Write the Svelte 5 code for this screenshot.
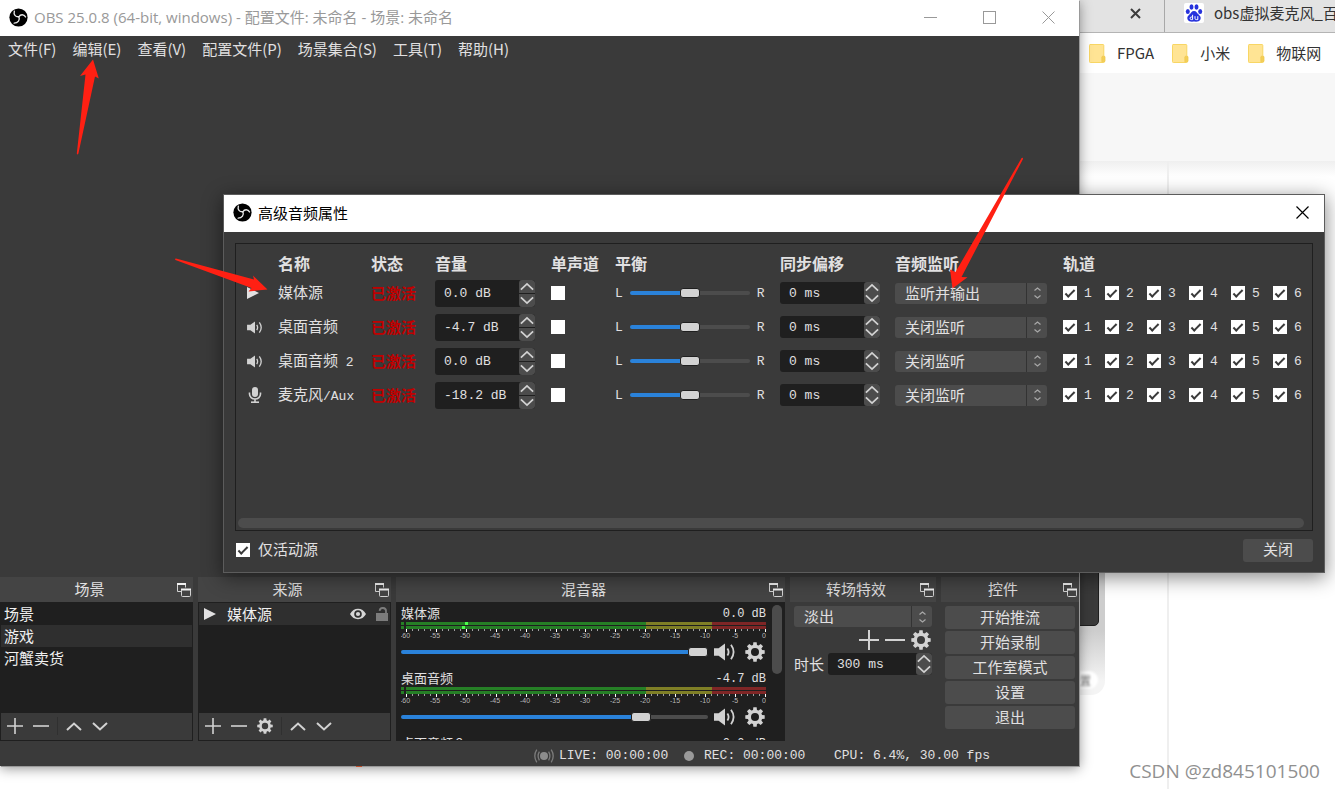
<script>
  const menus = ['文件(F)', '编辑(E)', '查看(V)', '配置文件(P)', '场景集合(S)', '工具(T)', '帮助(H)'];
  const bookmarks = ['FPGA', '小米', '物联网'];
  const scenes = ['场景', '游戏', '河蟹卖货'];
  const controls = ['开始推流', '开始录制', '工作室模式', '设置', '退出'];
  const monitorModes = ['关闭监听', '仅监听', '监听并输出'];
  const tracks = [1, 2, 3, 4, 5, 6];

  const strips = [
    { name: '媒体源', suffix: '', db: '0.0 dB', level: 100, peaks: [64, 61] },
    { name: '桌面音频', suffix: '', db: '-4.7 dB', level: 80, peaks: [] },
    { name: '桌面音频', suffix: ' 2', db: '0.0 dB', level: 100, peaks: [] }
  ];
  const sources = [
    { icon: 'play', name: '媒体源', suffix: '', volume: '0.0 dB', monitor: '监听并输出' },
    { icon: 'speaker', name: '桌面音频', suffix: '', volume: '-4.7 dB', monitor: '关闭监听' },
    { icon: 'speaker', name: '桌面音频', suffix: ' 2', volume: '0.0 dB', monitor: '关闭监听' },
    { icon: 'mic', name: '麦克风', suffix: '/Aux', volume: '-18.2 dB', monitor: '关闭监听' }
  ];
  const minorTicks = Array.from({ length: 61 }, (_, i) => i);
  const majorTicks = Array.from({ length: 13 }, (_, i) => i);

  // Eight-toothed gear outline around (12, 12)
  const gearPath = (() => {
    const pts = [];
    for (let i = 0; i < 8; i++) {
      const a = (i * Math.PI) / 4 - Math.PI / 2;
      for (const [da, r] of [[-0.27, 8.8], [-0.17, 11.8], [0.17, 11.8], [0.27, 8.8]]) {
        pts.push(`${(12 + r * Math.cos(a + da)).toFixed(2)} ${(12 + r * Math.sin(a + da)).toFixed(2)}`);
      }
    }
    return `M${pts.join('L')}ZM12 7.2a4.8 4.8 0 1 0 0 9.6a4.8 4.8 0 1 0 0-9.6Z`;
  })();
</script>

{#snippet logo()}
  <svg class="logo" viewBox="0 0 20 20" aria-hidden="true">
    <circle cx="10" cy="10" r="9.6" fill="#000" />
    <g fill="none" stroke="#e8e8e8" stroke-width="1.4" stroke-linecap="round">
      <path d="M5.6 3.4C4.6 6.8 6.8 9.6 10.4 9.2" />
      <path d="M10.4 9.2C12 6.6 15.6 6.2 17.4 9.4" />
      <path d="M10.4 9.2C11.8 12.4 9.6 16 5.4 16" />
    </g>
  </svg>
{/snippet}

{#snippet gear(size)}
  <svg width={size} height={size} viewBox="0 0 24 24" aria-hidden="true"><path d={gearPath} fill="#d2d2d2" fill-rule="evenodd" /></svg>
{/snippet}

{#snippet plus(size)}
  <svg width={size} height={size} viewBox="0 0 20 20" aria-hidden="true"><path d="M10 0v20M0 10h20" stroke="#d2d2d2" stroke-width="2" /></svg>
{/snippet}

{#snippet minus(size)}
  <svg width={size} height={size} viewBox="0 0 20 20" aria-hidden="true"><path d="M0 10h20" stroke="#d2d2d2" stroke-width="2" /></svg>
{/snippet}

{#snippet chevron(dir, w, h, sw)}
  <svg width={w} height={h} viewBox="0 0 16 10" aria-hidden="true">
    <path d={dir === 'up' ? 'M1 8.5L8 2l7 6.5' : 'M1 1.5L8 8l7-6.5'} fill="none" stroke="#d2d2d2" stroke-width={sw} />
  </svg>
{/snippet}

{#snippet speaker(w, h)}
  <svg width={w} height={h} viewBox="0 0 22 18" aria-hidden="true">
    <path d="M0 5.2h4.6L11 .6v16.8L4.6 12.8H0Z" fill="#d2d2d2" />
    <path d="M13.4 5.4q2.4 3.6 0 7.2M17 1.8q5.2 7.2 0 14.4" fill="none" stroke="#d2d2d2" stroke-width="1.8" />
  </svg>
{/snippet}

{#snippet play()}
  <svg width="12" height="12" viewBox="0 0 12 12" aria-hidden="true"><path d="M0 0l12 6L0 12Z" fill="#e1e0e1" /></svg>
{/snippet}

{#snippet check(label, id)}
  <label class="check"><input type="checkbox" checked {id} /><span>{label}</span></label>
{/snippet}

{#snippet spin(value, label, kind)}
  <div class="spin {kind}">
    <input type="text" {value} aria-label={label} />
    <div class="steps">
      <button aria-label="增加">{@render chevron('up', 14, 9, 2)}</button>
      <button aria-label="减少">{@render chevron('down', 14, 9, 2)}</button>
    </div>
  </div>
{/snippet}

{#snippet combo(options, value, label)}
  <div class="combo">
    <select {value} aria-label={label}>
      {#each options as option}<option value={option}>{option}</option>{/each}
    </select>
    <span class="arrows">
      <svg width="7" height="12" viewBox="0 0 7 12" aria-hidden="true">
        <path d="M.5 3.5l3-2.500l3 2.500M.5 8.500l3 2.500l3-2.500" fill="none" stroke="#a8a8a8" stroke-width="1.2" />
      </svg>
    </span>
  </div>
{/snippet}

{#snippet dockHead(title)}
  <header class="dock-head">
    <h2>{title}</h2>
    <button aria-label="浮动">
      <svg width="14" height="14" viewBox="0 0 14 14" aria-hidden="true">
        <path d="M4.500 8.500H.5V.5h8v4" fill="none" stroke="#d2d2d2" />
        <path d="M0 1h9" stroke="#f2f2f2" stroke-width="2" />
        <rect x="4.500" y="6.500" width="9" height="7" rx="1" fill="none" stroke="#d2d2d2" />
        <path d="M4 6.500h10" stroke="#f2f2f2" stroke-width="2" />
      </svg>
    </button>
  </header>
{/snippet}

<div class="desktop">
  <div class="browser">
    <div class="tabs">
      <div class="tab first"><button aria-label="关闭标签页">
        <svg width="11" height="11" viewBox="0 0 11 11" aria-hidden="true"><path d="M1 1l9 9M10 1l-9 9" stroke="#3c3c3c" stroke-width="2" /></svg>
      </button></div>
      <div class="tab">
        <svg class="paw" viewBox="0 0 20 20" aria-hidden="true">
          <rect width="20" height="20" rx="2" fill="#fff" />
          <g fill="#2632dc">
            <ellipse cx="3.800" cy="8.600" rx="2" ry="2.500" />
            <ellipse cx="7.500" cy="4" rx="2" ry="2.700" />
            <ellipse cx="12.500" cy="4" rx="2" ry="2.700" />
            <ellipse cx="16.200" cy="8.600" rx="2" ry="2.500" />
            <path d="M10 8c2.400 0 3 2.200 4.600 3.600 1.800 1.500 2.600 3 1.800 5-1 2.400-3.800 2-6.400 2s-5.400.4-6.400-2c-.8-2 0-3.500 1.800-5C7 10.200 7.600 8 10 8Z" />
          </g>
          <path d="M8.600 11.800v4.800M8.600 14h-1.200a1.300 1.300 0 0 0 0 2.600h1.200M11 13.200v2.200q0 1.200 1.300 1.200h1.500v-3.400" fill="none" stroke="#fff" stroke-width="1" />
        </svg>
        <span>obs虚拟麦克风_百</span>
      </div>
    </div>
    <nav class="bookmarks">
      {#each bookmarks as item}
        <a href="#top">
          <svg width="17" height="19" viewBox="0 0 17 19" aria-hidden="true">
            <path d="M1 .5h13q.8 0 .8.8v10.400l1 .8v4.500q0 1.500-1.500 1.500H1.300q-.8 0-.8-.8V1.300q0-.8.8-.8Z" fill="#ffe494" stroke="#f8d664" />
            <path d="M12.800 17.800v-4.600q0-1 1-1h1q1 0 1 1v3.600q0 1-1 1Z" fill="#f3cf58" stroke="#eec54a" stroke-width=".6" />
          </svg>
          <span>{item}</span>
        </a>
      {/each}
    </nav>
    <div class="band"></div>
    <div class="page">
      <div class="figure"><div class="figure-dark"></div><span class="pill">设置</span></div>
      <div class="rule"></div>
    </div>
  </div>
  <span class="speck"></span>

  <section class="window main">
    <header class="titlebar">
      {@render logo()}
      <h1>OBS 25.0.8 (64-bit, windows) - 配置文件: 未命名 - 场景: 未命名</h1>
      <div class="sysbuttons">
        <button aria-label="最小化"><svg width="13" height="13" viewBox="0 0 13 13"><path d="M0 6.500h13" stroke="#999" /></svg></button>
        <button aria-label="最大化"><svg width="13" height="13" viewBox="0 0 13 13"><rect x=".5" y=".5" width="12" height="12" fill="none" stroke="#999" /></svg></button>
        <button aria-label="关闭"><svg width="13" height="13" viewBox="0 0 13 13"><path d="M.5.5l12 12M12.500.5l-12 12" stroke="#999" /></svg></button>
      </div>
    </header>
    <nav class="menubar">
      {#each menus as item}<button>{item}</button>{/each}
    </nav>
    <div class="preview"></div>

    <div class="docks">
      <section class="dock">
        {@render dockHead('场景')}
        <div class="list">
          <ul>
            {#each scenes as scene, i}<li class:selected={i === 1}>{scene}</li>{/each}
          </ul>
          <div class="toolbar">
            <button aria-label="添加">{@render plus(16)}</button>
            <button aria-label="移除">{@render minus(16)}</button>
            <i></i>
            <button aria-label="上移">{@render chevron('up', 16, 11, 2)}</button>
            <button aria-label="下移">{@render chevron('down', 16, 11, 2)}</button>
          </div>
        </div>
      </section>

      <section class="dock">
        {@render dockHead('来源')}
        <div class="list">
          <ul>
            <li class="source selected">
              {@render play()}
              <span>媒体源</span>
              <svg width="16" height="12" viewBox="0 0 16 12" aria-hidden="true">
                <path d="M0 6Q3 .8 8 .8T16 6Q13 11.200 8 11.200T0 6Z" fill="#d6d6d6" />
                <circle cx="8" cy="6" r="3.800" fill="#2e2e2e" /><circle cx="8" cy="6" r="2.100" fill="#d6d6d6" />
              </svg>
              <svg width="12" height="14" viewBox="0 0 12 14" aria-hidden="true">
                <rect y="6" width="12" height="8" fill="#7c7c7c" />
                <path d="M10 6V4.500a3.200 3.200 0 0 0-6.400-.6" fill="none" stroke="#7c7c7c" stroke-width="1.800" />
              </svg>
            </li>
          </ul>
          <div class="toolbar">
            <button aria-label="添加">{@render plus(16)}</button>
            <button aria-label="移除">{@render minus(16)}</button>
            <button aria-label="属性">{@render gear(16)}</button>
            <i></i>
            <button aria-label="上移">{@render chevron('up', 16, 11, 2)}</button>
            <button aria-label="下移">{@render chevron('down', 16, 11, 2)}</button>
          </div>
        </div>
      </section>

      <section class="dock">
        {@render dockHead('混音器')}
        <div class="mixer">
          <div class="strips">
            {#each strips as strip}
              <div class="strip">
                <div class="strip-head">
                  <span class="strip-name">{strip.name}{strip.suffix}</span><span class="db">{strip.db}</span>
                </div>
                <svg class="meter" viewBox="0 0 365 18" aria-hidden="true">
                  {#each [0, 4] as y}
                    <rect x="0" {y} width="3" height="3" fill="#267f26" />
                    <rect x="5" {y} width="240" height="3" fill="#267f26" />
                    <rect x="245" {y} width="66" height="3" fill="#7f7f26" />
                    <rect x="311" {y} width="54" height="3" fill="#7f2626" />
                  {/each}
                  {#each strip.peaks as x, i}<rect {x} y={i * 4} width="3" height="3" fill="#4cff4c" />{/each}
                  {#each minorTicks as t}
                    <rect x={5 + Math.round(t * 5.98)} y="7" width="1" height={t % 5 === 0 ? 3 : 2} fill={t % 5 === 0 ? '#fff' : '#a0a0a0'} />
                  {/each}
                  {#each majorTicks as t}
                    <text x={t === 12 ? 363 : 4 + t * 30} y="16" text-anchor="middle">{t === 12 ? '0' : t * 5 - 60}</text>
                  {/each}
                </svg>
                <div class="strip-controls">
                  <input type="range" class="range" min="0" max="100" value={strip.level} style="--p:{strip.level}%" aria-label="{strip.name}{strip.suffix} 音量" />
                  <button aria-label="静音">{@render speaker(22, 18)}</button>
                  <button aria-label="设置">{@render gear(20)}</button>
                </div>
              </div>
            {/each}
          </div>
          <div class="vscroll"></div>
        </div>
      </section>

      <section class="dock">
        {@render dockHead('转场特效')}
        <div class="transition">
          {@render combo(['淡出', '直接切换'], '淡出', '转场特效')}
          <div class="transition-tools">
            <button aria-label="添加">{@render plus(20)}</button>
            <button aria-label="移除">{@render minus(20)}</button>
            <button aria-label="属性">{@render gear(20)}</button>
          </div>
          <div class="duration"><span>时长</span>{@render spin('300 ms', '时长', 'short')}</div>
        </div>
      </section>

      <section class="dock">
        {@render dockHead('控件')}
        <div class="controls">
          {#each controls as item}<button>{item}</button>{/each}
        </div>
      </section>
    </div>

    <footer class="status">
      <span class="live">
        <svg width="20" height="14" viewBox="0 0 20 14" aria-hidden="true">
          <circle cx="10" cy="7" r="4" fill="#8c8c8c" />
          <path d="M5.400 2.600q-2.600 4.400 0 8.800M14.600 2.600q2.600 4.400 0 8.800M2.800.6q-4 6.400 0 12.800M17.200.6q4 6.400 0 12.800" fill="none" stroke="#7c7c7c" stroke-width="1.300" />
        </svg>
        LIVE: 00:00:00
      </span>
      <span class="rec"><b></b>REC: 00:00:00</span>
      <span class="cpu">CPU: 6.4%, 30.00 fps</span>
    </footer>
  </section>

  <section class="window dialog" role="dialog" aria-label="高级音频属性">
    <header class="titlebar">
      {@render logo()}
      <h1>高级音频属性</h1>
      <button class="close" aria-label="关闭"><svg width="13" height="13" viewBox="0 0 13 13"><path d="M.5.5l12 12M12.500.5l-12 12" stroke="#000" stroke-width="1.200" /></svg></button>
    </header>
    <div class="dialog-body">
      <div class="frame">
        <table>
          <colgroup>
            <col class="c-icon" /><col class="c-name" /><col class="c-state" /><col class="c-volume" /><col class="c-mono" />
            <col class="c-balance" /><col class="c-sync" /><col class="c-monitor" /><col />
          </colgroup>
          <thead>
            <tr><th></th><th>名称</th><th>状态</th><th>音量</th><th>单声道</th><th>平衡</th><th>同步偏移</th><th>音频监听</th><th>轨道</th></tr>
          </thead>
          <tbody>
            {#each sources as row}
              <tr>
                <td class="icon">
                  {#if row.icon === 'play'}{@render play()}
                  {:else if row.icon === 'speaker'}{@render speaker(16, 13)}
                  {:else}
                    <svg width="16" height="16" viewBox="0 0 16 16" aria-hidden="true">
                      <rect x="5" width="6" height="10" rx="3" fill="#d2d2d2" />
                      <path d="M2.500 5.500v1.500a5.500 5 0 0 0 11 0V5.500M8 12v3" fill="none" stroke="#d2d2d2" stroke-width="1.600" />
                      <path d="M4 15.200h8" stroke="#d2d2d2" stroke-width="1.600" />
                    </svg>
                  {/if}
                </td>
                <td>{row.name}<span class="latin">{row.suffix}</span></td>
                <td class="state">已激活</td>
                <td>{@render spin(row.volume, '音量', 'tall')}</td>
                <td><input type="checkbox" aria-label="单声道" /></td>
                <td>
                  <div class="balance"><span>L</span><input type="range" class="range" value="50" style="--p:50%" aria-label="平衡" /><span>R</span></div>
                </td>
                <td>{@render spin('0 ms', '同步偏移', 'short')}</td>
                <td>{@render combo(monitorModes, row.monitor, '音频监听')}</td>
                <td><div class="tracks">{#each tracks as t}{@render check(t, undefined)}{/each}</div></td>
              </tr>
            {/each}
          </tbody>
        </table>
        <div class="hscroll"></div>
      </div>
      <div class="dialog-foot">
        {@render check('仅活动源', 'active-only')}
        <button>关闭</button>
      </div>
    </div>
  </section>

  <svg class="annotations" width="1335" height="789" viewBox="0 0 1335 789" aria-hidden="true">
    <g fill="#ff2013">
      <path d="M93 59.500L80 76l5.500-1.500L76.800 153.500q.6 2 1.600 0L95 76.500l3.800 2Z" />
      <path d="M267.500 289.500L253 275.500l1 4L176 258.500q-1.600.2-.6 1.400L251.500 288l-3 3.400Z" />
      <path d="M952.500 288.500L950 269.500l5.500 2.600L1021.600 158q1.600-.6 1.400 1L961.500 277l6 .2Z" />
    </g>
  </svg>
  <p class="watermark">CSDN @zd845101500</p>
</div>

<style>
  :global(body) { margin: 0; background: #fff; }
  .desktop {
    --dark: #3a3a3a; --deep: #1f1f1f; --control: #4c4c4c; --text: #e1e0e1;
    --mono: "Liberation Mono", "Noto Sans CJK SC", monospace;
    position: relative; min-height: 100vh; overflow: hidden; background: #fff;
    font: 15px/22px "Noto Sans CJK SC", sans-serif; color: var(--text);
  }
  .desktop *, .desktop *::before { box-sizing: border-box; }
  h1, h2, p, ul { margin: 0; padding: 0; font-size: inherit; font-weight: 400; list-style: none; }
  button { display: flex; align-items: center; justify-content: center; margin: 0; padding: 0; border: 0; background: none; color: inherit; font: inherit; }
  input, select { margin: 0; font: inherit; color: inherit; }
  svg { display: block; flex: none; }

  .browser { display: flex; flex-direction: column; min-height: 100vh; margin-left: calc(100% - 256px); color: #333; }
  .tabs { display: flex; height: 33px; overflow: hidden; background: #e3e3e3; border-bottom: 1px solid #b4b4b4; }
  .tab { display: flex; align-items: center; gap: 10px; flex: none; padding: 0 0 6px 19px; white-space: nowrap; }
  .tab.first { width: 86px; padding-left: 51px; border-right: 1px solid #a8a8a8; }
  .paw { width: 20px; height: 20px; }
  .bookmarks { display: flex; align-items: center; gap: 18px; height: 40px; padding: 0 0 0 10px; white-space: nowrap; overflow: hidden; }
  .bookmarks a { display: flex; align-items: center; gap: 11px; color: inherit; text-decoration: none; }
  .band { height: 88px; background: #f7f7f7; }
  .page { display: flex; flex: 1; background: linear-gradient(#efefef, #fff 16px); }
  .figure { display: flex; flex-direction: column; width: 26px; height: 534px; clip-path: inset(400px 0 0 0 round 0 0 14px 0); background: linear-gradient(#cdcdcd 470px, #f4f4f4 520px); }
  .figure-dark { flex: none; width: 20px; height: 465px; border: 1px solid #1f1f1f; border-radius: 0 0 5px 0; background: #3a3a3a; }
  .pill { display: flex; justify-content: flex-end; width: 19px; margin-top: 45px; padding-right: 7px; border-radius: 0 9px 9px 0; background: #fff; color: #777; font-size: 11px; line-height: 18px; white-space: nowrap; filter: blur(1px); }
  .rule { width: 2px; margin-left: 62px; background: #efefef; }
  .speck { position: absolute; left: 356px; top: 766px; width: 6px; height: 1px; background: #c0502c; z-index: 2; }

  .window { position: absolute; display: flex; flex-direction: column; background: var(--dark); }
  .titlebar { display: flex; align-items: center; flex: none; gap: 6px; height: 36px; padding: 0 0 2px 9px; background: #fff; color: #999; white-space: nowrap; }
  .logo { width: 19px; height: 19px; }
  .main { left: 0; top: 0; width: calc(100% - 256px); height: calc(100vh - 23px); box-shadow: 1px 1px 0 #999, 0 2px 12px rgba(0, 0, 0, .45); }
  .main h1 { font-family: "Open Sans", "Noto Sans CJK SC", sans-serif; }
  .sysbuttons { display: flex; gap: 46px; margin-left: auto; padding-right: 24px; }
  .menubar { display: flex; gap: 16px; flex: none; height: 26px; padding-left: 8px; }
  .preview { flex: 1; }

  .docks { display: grid; grid-template-columns: 193fr 193fr 389fr 146fr 138fr; gap: 5px; height: 164px; }
  .dock { display: flex; flex-direction: column; min-width: 0; min-height: 0; }
  .dock-head { display: grid; grid-template-columns: 1fr 14px; align-items: center; flex: none; height: 25px; padding: 0 2px 0 2px; background: #444; text-align: center; }
  .dock-head h2 { padding-bottom: 2px; }
  .list { display: flex; flex-direction: column; flex: 1; border: 1px solid var(--deep); background: var(--deep); }
  .list ul { flex: 1; }
  .list li { height: 22px; padding-left: 3px; color: #f0f0f0; }
  .list li.selected { background: #2f2f2f; }
  .list li.source { display: flex; align-items: center; gap: 10px; padding: 0 2px 0 5px; }
  .source span { flex: 1; padding-left: 1px; }
  .toolbar { display: flex; height: 27px; padding: 0 0 1px 1px; background: var(--dark); }
  .toolbar button { width: 26px; }
  .toolbar i { width: 1px; margin: 4px 3px; background: #303030; }

  .mixer { display: flex; flex: 1; min-height: 0; padding: 1px 3px 1px 5px; gap: 6px; background: var(--deep); }
  .strips { flex: 1; min-width: 0; overflow: hidden; }
  .strip { height: 65px; }
  .strip-head { display: flex; justify-content: space-between; height: 19px; font-size: 13px; line-height: 20px; }
  .db { font: 12px/22px var(--mono); }
  .meter { width: 100%; height: auto; }
  .meter text { font: 7px "Liberation Sans", sans-serif; fill: #b8b8b8; }
  .strip-controls { display: flex; align-items: center; height: 24px; padding-right: 1px; }
  .strip-controls .range { flex: 1; margin-right: 6px; }
  .strip-controls button + button { margin-left: 9px; }
  .vscroll { width: 10px; height: 69px; margin-top: 2px; border-radius: 5px; background: var(--control); }

  .range { appearance: none; width: 120px; min-width: 0; height: 12px; background: none; }
  .range::-webkit-slider-runnable-track { height: 4px; border-radius: 2px; background: linear-gradient(90deg, #2a82da var(--p), var(--control) var(--p)); }
  .range::-webkit-slider-thumb { appearance: none; width: 20px; height: 10px; margin-top: -3px; border: 1px solid var(--deep); border-radius: 3px; background: #d2d2d2; }

  .transition { display: flex; flex-direction: column; padding: 4px; }
  .transition-tools { display: flex; justify-content: flex-end; gap: 6px; height: 26px; padding-right: 1px; }
  .duration { display: flex; align-items: center; gap: 4px; }
  .duration span { white-space: nowrap; }
  .duration .spin { flex: 1; }
  .controls { display: flex; flex-direction: column; gap: 2px; padding: 4px; }
  .controls button, .dialog-foot button { height: 23px; padding-bottom: 2px; border-radius: 3px; background: var(--control); }

  .status { display: flex; justify-content: flex-end; align-items: center; height: 25px; padding: 4px 85px 0 0; font: 13px/22px var(--mono); white-space: nowrap; }
  .live, .rec { display: flex; align-items: center; gap: 5px; width: 150px; }
  .rec b { width: 10px; height: 10px; margin-right: 5px; border-radius: 5px; background: #999; }
  .cpu { width: 160px; }

  .dialog { left: 224px; right: 11px; top: 195px; height: 377px; box-shadow: 0 0 0 1px #5c5c5c, 0 4px 18px 2px rgba(0, 0, 0, .45); }
  .dialog .titlebar { height: 37px; color: #000; }
  .close { margin-left: auto; padding-right: 15px; }
  .dialog-body { display: flex; flex-direction: column; flex: 1; padding: 11px 11px 10px; }
  .frame { display: flex; flex-direction: column; flex: 1; border: 1px solid var(--deep); }
  table { width: 100%; table-layout: fixed; border-collapse: collapse; }
  th { height: 32px; padding: 6px 0 0; text-align: left; font-size: 16px; line-height: 24px; white-space: nowrap; }
  td { height: 34px; padding: 0; white-space: nowrap; }
  .c-icon { width: 42px; } .c-name { width: 93px; } .c-state { width: 64px; } .c-volume { width: 116px; } .c-mono { width: 64px; }
  .c-balance { width: 165px; } .c-sync { width: 115px; } .c-monitor { width: 168px; }
  .icon { padding-left: 11px; }
  .state { color: #c00000; font-weight: 700; }
  .latin { font: 13px/22px var(--mono); white-space: pre; }
  .balance { display: flex; align-items: center; gap: 7px; font: 13px/22px var(--mono); }
  .balance span, .tracks span { padding-top: 2px; }
  .tracks { display: flex; }
  .tracks .check { flex: none; width: 42px; font: 13px/22px var(--mono); }
  .check { display: flex; align-items: center; gap: 7px; }
  input[type='checkbox'] { appearance: none; display: grid; place-items: center; width: 14px; height: 14px; background: #fff; }
  input[type='checkbox']:checked::before { content: ''; width: 10px; height: 5px; border: solid #3a3a3a; border-width: 0 0 2px 2px; transform: translateY(-1px) rotate(-45deg); }

  .spin { display: flex; width: 100px; height: 22px; border-radius: 3px; background: var(--deep); overflow: hidden; }
  .spin.tall { height: 27px; }
  .spin input { flex: 1; width: 0; padding: 2px 0 0 9px; border: 0; background: none; font: 13px/20px var(--mono); }
  .steps { display: flex; flex-direction: column; width: 16px; border-radius: 3px; background: var(--control); }
  .steps button { flex: 1; }
  .tall .steps button + button { border-top: 1px solid var(--deep); }
  .combo { display: grid; width: 152px; height: 21px; }
  .transition .combo { width: 100%; }
  .combo > * { grid-area: 1 / 1; }
  .combo select { appearance: none; width: 100%; height: 21px; padding: 0 24px 2px 10px; border: 0; border-radius: 3px; background: var(--control); line-height: 19px; }
  .arrows { display: grid; place-items: center; justify-self: end; width: 21px; border-left: 1px solid #333; pointer-events: none; }
  .hscroll { height: 10px; margin: auto 8px 2px 2px; border-radius: 5px; background: var(--control); }
  .dialog-foot { display: flex; justify-content: space-between; align-items: center; padding-top: 7px; }
  .dialog-foot .check { gap: 8px; padding-left: 1px; }
  .dialog-foot .check span { padding-bottom: 2px; }
  .dialog-foot button { width: 70px; }

  .annotations { position: absolute; left: 0; top: 0; pointer-events: none; }
  .watermark { position: absolute; right: 15px; bottom: 6px; color: #909090; font: 19px/24px "Open Sans", "Noto Sans", sans-serif; text-shadow: 1px 1px 0 #fff; }
</style>
